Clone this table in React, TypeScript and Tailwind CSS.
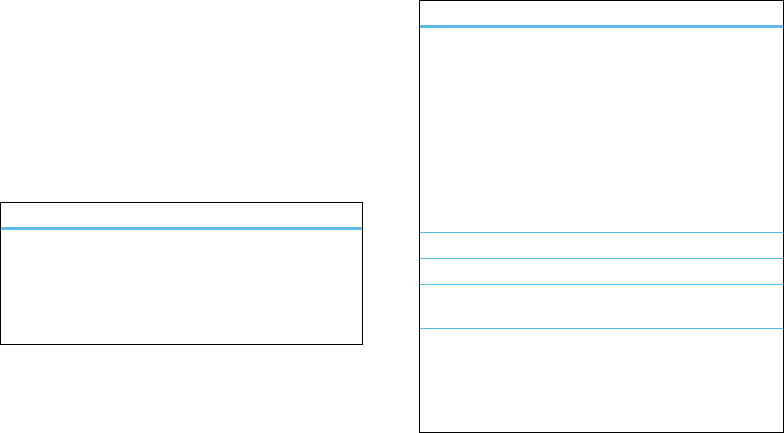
const App = () => {
  return (
    <main className="flex w-[784px] h-[433px] bg-white">
      <div className="pt-[202px]">
        <section className="w-[363px] h-[143px] border border-black flex flex-col">
          <div className="h-[27px] border-b-[3px] border-[#5bbcea]" />
          <div className="flex-1" />
        </section>
      </div>

      <section className="ml-[56px] w-[365px] h-[433px] border border-black flex flex-col">
        <div className="h-[27px] border-b-[3px] border-[#5bbcea]" />
        <div className="h-[205px] border-b border-[#4dbdf0]" />
        <div className="h-[26px] border-b border-[#4dbdf0]" />
        <div className="h-[26px] border-b border-[#4dbdf0]" />
        <div className="h-[44px] border-b border-[#4dbdf0]" />
        <div className="flex-1" />
      </section>
    </main>
  )
}

export default App
